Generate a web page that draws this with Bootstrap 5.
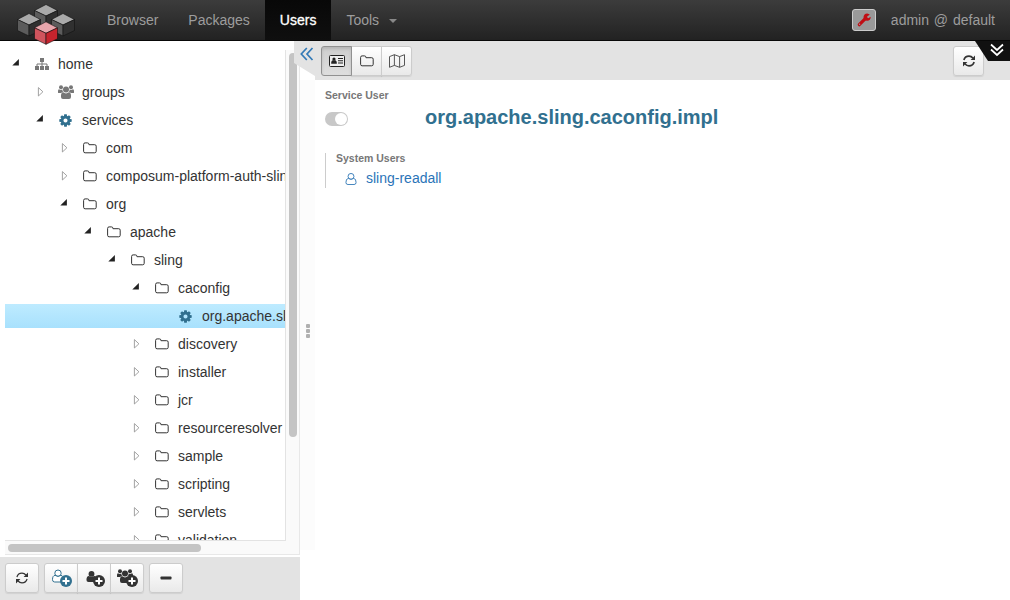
<!DOCTYPE html>
<html lang="en">
<head>
<meta charset="utf-8">
<meta name="viewport" content="width=device-width, initial-scale=1">
<title>Users</title>
<link rel="stylesheet" href="https://cdn.jsdelivr.net/npm/bootstrap@5.3.0/dist/css/bootstrap.min.css">
<style>
body{font:14px/20px "Liberation Sans",Arial,sans-serif;color:#333;height:600px;overflow:hidden;background:#fff}
svg{display:block;overflow:visible}
a{color:#2a74b8;text-decoration:none}
.topbar{height:41px;padding:0;background:linear-gradient(#3c3c3c,#222);border-bottom:1px solid #080808;flex-wrap:nowrap;z-index:3}
.topbar .nav-link{color:#9d9d9d;padding:10px 15px 10px;height:40px;line-height:20px}
.topbar .nav-link.active{color:#fff;background:linear-gradient(#080808,#0f0f0f);-webkit-text-stroke:.3px #fff}
.logo-link{width:92px;height:40px;padding:4px 0 0 17px}
.caret{border:4px solid transparent;border-top-color:#888;border-bottom:0;margin:0 0 1px 10px;display:inline-block;vertical-align:middle}
.wrench{width:24px;height:22px;border:1px solid #ccc;border-radius:3px;background:#999}
.who{color:#9d9d9d;word-spacing:1px;margin:0 15px 0 15px}
.side{width:300px}
.tree-frame{margin:9px 0 2px 5px;height:505px;width:295px;background:#fafafa;border-right:1px solid #e8e8e8;border-bottom:1px solid #e8e8e8}
.tree-view{width:281px;height:491px;flex:none;overflow:hidden;background:#fff;border-right:1px solid #e3e3e3;border-bottom:1px solid #e3e3e3}
.tree-row{height:24px;margin-bottom:4px;white-space:nowrap;padding-left:calc(var(--lv)*24px);width:600px}
.tree-row.selected{background:linear-gradient(#beebff,#a8e1fd)}
.tw{width:24px;padding-left:7px;flex:none}
.tw svg{width:9px;height:12px}
.ic{width:29px;padding-left:5px;flex:none}
.vbar{width:13px;flex:none;height:491px;padding:3px 2px 0 3px}
.vbar div{width:8px;height:384px;border-radius:4px;background:#c4c4c4}
.hbar{height:13px;padding:3px 0 0 3px}
.hbar div{width:193px;height:8px;border-radius:4px;background:#c4c4c4}
.tools{background:#e3e3e3}
.side .tools{height:43px;padding:6px 5px;gap:5px}
.tool.btn{height:30px;padding:0;border:1px solid #ccc;border-radius:3px;background:linear-gradient(#fff,#e9e9e9);box-shadow:0 1px 1px rgba(0,0,0,.08);display:flex;align-items:center;justify-content:center;flex:none;color:#333}
.tool.btn.pressed{background:linear-gradient(#cecece,#dedede);border-color:#919191;box-shadow:inset 0 2px 3px rgba(0,0,0,.12);z-index:1}
.detail-bar{height:39px;margin-left:-6px;padding:5px 26px 0 6px;clip-path:polygon(0 0,100% 0,100% 100%,21px 100%,21px 35px,0 22px)}
.split{width:15px;height:470px;background:#fcfcfc}
.grip{width:4px;height:4px;border-radius:1px;background:#b0b0b0;margin-bottom:1px}
.fold{position:absolute;right:0;top:41px;width:35px;height:20px;background:#111;clip-path:polygon(0 0,100% 0,100% 100%,13px 100%);z-index:4}
.fold svg{margin:2px 0 0 15px}
.cap{font-size:10.5px;line-height:14px;font-weight:bold;color:#777}
.switch{width:23px;height:14px;border-radius:7px;background:#c8c8c8;padding:1px;margin-top:1px}
.switch div{width:12px;height:12px;border-radius:50%;background:#fff;margin-left:9px}
.title{font-size:20px;line-height:24px;font-weight:bold;color:#31708f;margin:0}
.sys{border-left:1px solid #ccc;height:35px;padding-left:10px;margin-top:21px;display:flow-root}
</style>
</head>
<body>
<svg width="0" height="0" class="position-absolute">
<symbol id="folder" viewBox="0 0 14 12"><path d="M.6 2.4Q.6.9 2.1.9H4.4Q5.900.9 5.900 2.200V2.700H11.700Q13.200 2.700 13.200 4.200V9.300Q13.200 10.800 11.700 10.800H2.100Q.6 10.800.6 9.300Z" fill="none" stroke="currentColor" stroke-width="1"/></symbol>
<symbol id="open" viewBox="0 0 9 12"><path d="M.3 7.600 6.900 1V7.600Z" fill="#222"/></symbol>
<symbol id="closed" viewBox="0 0 9 12"><path d="M2.400 1.600 6.900 5.800 2.400 10Z" fill="#fff" stroke="#999" stroke-width=".9"/></symbol>
<symbol id="sitemap" viewBox="0 0 14 12"><path d="M5 0h4v4H5ZM0 8h4v4H0ZM5 8h4v4H5ZM10 8h4v4h-4Z" fill="#777"/><path d="M7 3v6M2 9V6H12V9" fill="none" stroke="#777"/></symbol>
<symbol id="group" viewBox="0 0 16 14"><g fill="currentColor"><circle cx="3" cy="2.300" r="2"/><circle cx="13" cy="2.300" r="2"/><circle cx="8" cy="4.400" r="3"/><path d="M0 7.500V6Q0 4.400 1 4.200Q2.800 5.400 4.400 4.500Q4.300 6 5.200 7Q3.800 7 3.200 8H1.200Q0 8.400 0 7.500ZM16 7.500V6Q16 4.400 15 4.200Q13.200 5.400 11.600 4.500Q11.700 6 10.800 7Q12.200 7 12.800 8H14.800Q16 8.400 16 7.500ZM3 12V10.500Q3 7.500 5.200 7.300Q8 9.500 10.800 7.300Q13 7.500 13 10.500V12Q13 14 11 14H5Q3 14 3 12Z"/></g></symbol>
<symbol id="gear" viewBox="-6.500 -6.500 13 13"><g fill="#31708f"><path id="tooth" d="M-1.300-6.200H1.300L1.700-3H-1.700ZM-1.300 6.200H1.300L1.700 3H-1.700Z"/><use href="#tooth" transform="rotate(45)"/><use href="#tooth" transform="rotate(90)"/><use href="#tooth" transform="rotate(135)"/></g><circle r="3.400" fill="none" stroke="#31708f" stroke-width="2.700"/></symbol>
<symbol id="refresh" viewBox="0 0 12 12"><path d="M.9 5Q2 1.200 6 1.200Q8.300 1.200 9.900 3M11.100 7Q10 10.800 6 10.800Q3.700 10.800 2.100 9" fill="none" stroke="currentColor" stroke-width="var(--sw,1.700)"/><path d="M12 .6V5H7.600ZM0 11.400V7H4.400Z" fill="currentColor"/></symbol>
<symbol id="person" viewBox="0 0 12 13"><circle cx="6" cy="3.700" r="3.200"/><path d="M3.100 5.900Q.5 6 .5 10.200Q.5 12.500 2.700 12.500H9.300Q11.500 12.500 11.500 10.200Q11.500 6 8.900 5.900Q6 8 3.100 5.900Z"/></symbol>
<symbol id="plus" viewBox="0 0 12 12"><circle cx="6" cy="6" r="6" fill="currentColor"/><path d="M6 2.500V9.500M2.500 6H9.500" stroke="#fff" stroke-width="2"/></symbol>
</svg>

<nav class="navbar topbar d-flex align-items-start">
  <a class="logo-link" href="#" aria-label="Home"><svg width="60" height="42" viewBox="0 0 60 42">
    <g stroke="#111" stroke-width=".6" stroke-linejoin="round">
      <g id="cube" transform="translate(17.500 .5)"><path d="M0 6 11.500 0 23 6 11.500 11.500Z" fill="#aaa"/><path d="M0 6 11.500 11.500V22.500L0 17Z" fill="#5c5c5c"/><path d="M11.500 11.500 23 6V17L11.500 22.500Z" fill="#303030"/></g>
      <use href="#cube" x="-17" y="9"/><use href="#cube" x="17" y="9"/>
      <g transform="translate(17.500 17.800)"><path d="M0 6 11.500 0 23 6 11.500 11.500Z" fill="#e8a6ac"/><path d="M0 6 11.500 11.500V22.500L0 17Z" fill="#d0545d"/><path d="M11.500 11.500 23 6V17L11.500 22.500Z" fill="#c6242d"/></g>
    </g></svg></a>
  <div class="d-flex">
    <a class="nav-link" href="#">Browser</a>
    <a class="nav-link" href="#">Packages</a>
    <a class="nav-link active" href="#">Users</a>
    <a class="nav-link" href="#">Tools<span class="caret"></span></a>
  </div>
  <div class="d-flex align-items-center ms-auto h-100">
    <div class="wrench d-flex align-items-center justify-content-center"><svg width="14" height="14" viewBox="0 0 14 14"><path d="M2.300 11.700 8.300 5.700" stroke="#c00d14" stroke-width="3.200" stroke-linecap="round"/><path d="M12.800 1.700 10.300 3.200V4.500L11.300 5.200 13.700 3.800Q13.700 7.700 10.100 7.700 6.500 7.500 6.500 4 6.800.7 10.200.4 11.900.5 12.800 1.700Z" fill="#c00d14"/><circle cx="2.600" cy="11.300" r=".7" fill="#999"/></svg></div>
    <span class="who">admin @ default</span>
  </div>
</nav>

<main class="d-flex">
  <aside class="side flex-shrink-0">
    <div class="tree-frame">
      <div class="d-flex">
        <div class="tree-view"><div id="tree" style="padding-top:2px"></div></div>
        <div class="vbar"><div></div></div>
      </div>
      <div class="hbar"><div></div></div>
    </div>
    <div class="tools d-flex">
      <button class="btn tool" style="width:34px" aria-label="Refresh"><svg width="12" height="12" style="--sw:1.2"><use href="#refresh"/></svg></button>
      <div class="btn-group">
        <button class="btn tool" style="width:34px;color:#31708f" aria-label="Add system user"><svg width="20" height="18"><use href="#person" x="1" y="0" width="12" height="14" fill="#fff" stroke="currentColor"/><use href="#plus" x="9" y="6" width="12" height="12"/></svg></button>
        <button class="btn tool" style="width:34px" aria-label="Add user"><svg width="20" height="18"><use href="#person" x="2" y="1" width="11" height="13" fill="currentColor"/><use href="#plus" x="9" y="6" width="12" height="12"/></svg></button>
        <button class="btn tool" style="width:34px" aria-label="Add group"><svg width="20" height="18"><use href="#group" x="0" y="0" width="16" height="14"/><use href="#plus" x="9" y="6" width="12" height="12"/></svg></button>
      </div>
      <button class="btn tool" style="width:34px" aria-label="Remove"><svg width="12" height="4"><rect x=".5" y=".5" width="11" height="3" rx=".8" fill="#333"/></svg></button>
    </div>
  </aside>

  <section class="flex-grow-1">
    <div class="detail-bar tools d-flex align-items-start">
      <svg width="14" height="14" class="flex-shrink-0" viewBox="0 0 14 14"><path d="M6.800 1 1.300 7 6.800 13M12.500 1 7 7 12.500 13" transform="translate(0 1)" fill="none" stroke="#337ab7" stroke-width="1.700"/></svg>
      <div class="btn-group" style="margin-left:7px">
        <button class="btn tool pressed" style="width:31px" aria-label="User"><svg width="16" height="12"><rect x=".5" y=".5" width="15" height="11" rx="1" fill="#eee" stroke="#222"/><circle cx="5" cy="4" r="1.600" fill="#222"/><path d="M2.200 8.700Q2 5.500 4 5.200H6Q8 5.500 7.800 8.700ZM9 3h5v1H9ZM9 5.200h5v1H9ZM9 7.400h5v1H9ZM3 11v1h2v-1ZM11 11v1h2v-1Z" fill="#222"/></svg></button>
        <button class="btn tool" style="width:31px" aria-label="Paths"><svg width="14" height="12"><use href="#folder"/></svg></button>
        <button class="btn tool" style="width:31px" aria-label="Map"><svg width="16" height="14"><path d="M.5 2.600 5.400.7 10.600 2.600 15.500.7V11.400L10.600 13.300 5.400 11.400.5 13.300ZM5.400.7V11.400M10.600 2.600V13.300" fill="none" stroke="#444" stroke-width=".9"/></svg></button>
      </div>
      <button class="btn tool ms-auto" style="width:31px" aria-label="Reload"><svg width="12" height="12"><use href="#refresh"/></svg></button>
    </div>
    <div class="d-flex">
      <div class="split d-flex flex-column align-items-center justify-content-center" style="padding-top:32px"><div class="grip"></div><div class="grip"></div><div class="grip"></div></div>
      <div style="padding:8px 0 0 10px">
        <div class="cap">Service User</div>
        <div class="d-flex align-items-center" style="height:28px;margin-top:2px"><div class="switch"><div></div></div><h1 class="title" style="margin-left:77px;margin-top:-2px">org.apache.sling.caconfig.impl</h1></div>
        <div class="sys"><div class="cap" style="margin-top:-2px">System Users</div>
          <a href="#" class="d-flex align-items-center" style="margin:3px 0 0 9px;height:20px"><svg width="12" height="13" style="margin:2px 9px 0 0"><use href="#person" width="12" height="12" fill="#fff" stroke="#337ab7"/></svg>sling-readall</a>
        </div>
      </div>
    </div>
  </section>
</main>
<div class="fold"><svg width="14" height="14" viewBox="0 0 14 14"><path d="M1 1.500 7 7 13 1.500M1 6.500 7 12 13 6.500" fill="none" stroke="#fff" stroke-width="1.700"/></svg></div>

<script>
const rows=[[0,"home","open","sitemap"],[1,"groups","closed","group"],[1,"services","open","gear"],[2,"com","closed"],[2,"composum-platform-auth-sling","closed"],[2,"org","open"],[3,"apache","open"],[4,"sling","open"],[5,"caconfig","open"],[6,"org.apache.sling.caconfig.impl","","gear"],[5,"discovery","closed"],[5,"installer","closed"],[5,"jcr","closed"],[5,"resourceresolver","closed"],[5,"sample","closed"],[5,"scripting","closed"],[5,"servlets","closed"],[5,"validation","closed"]];
const size={sitemap:[14,12,1],group:[16,14,0],gear:[13,13,1],folder:[14,12,1]};
document.getElementById("tree").innerHTML=rows.map(([lv,name,tw,ic="folder"])=>{
  const [w,h,m]=size[ic];
  return `<div class="tree-row d-flex align-items-center${tw?"":" selected"}" style="--lv:${lv}"><span class="tw">${tw?`<svg><use href="#${tw}"/></svg>`:""}</span><span class="ic" style="color:${ic=="group"?"#777":"#333"}"><svg width="${w}" height="${h}" style="margin-left:${m}px"><use href="#${ic}"/></svg></span><span>${name}</span></div>`;
}).join("");
</script>
<script src="https://cdn.jsdelivr.net/npm/bootstrap@5.3.0/dist/js/bootstrap.bundle.min.js"></script>
</body>
</html>
